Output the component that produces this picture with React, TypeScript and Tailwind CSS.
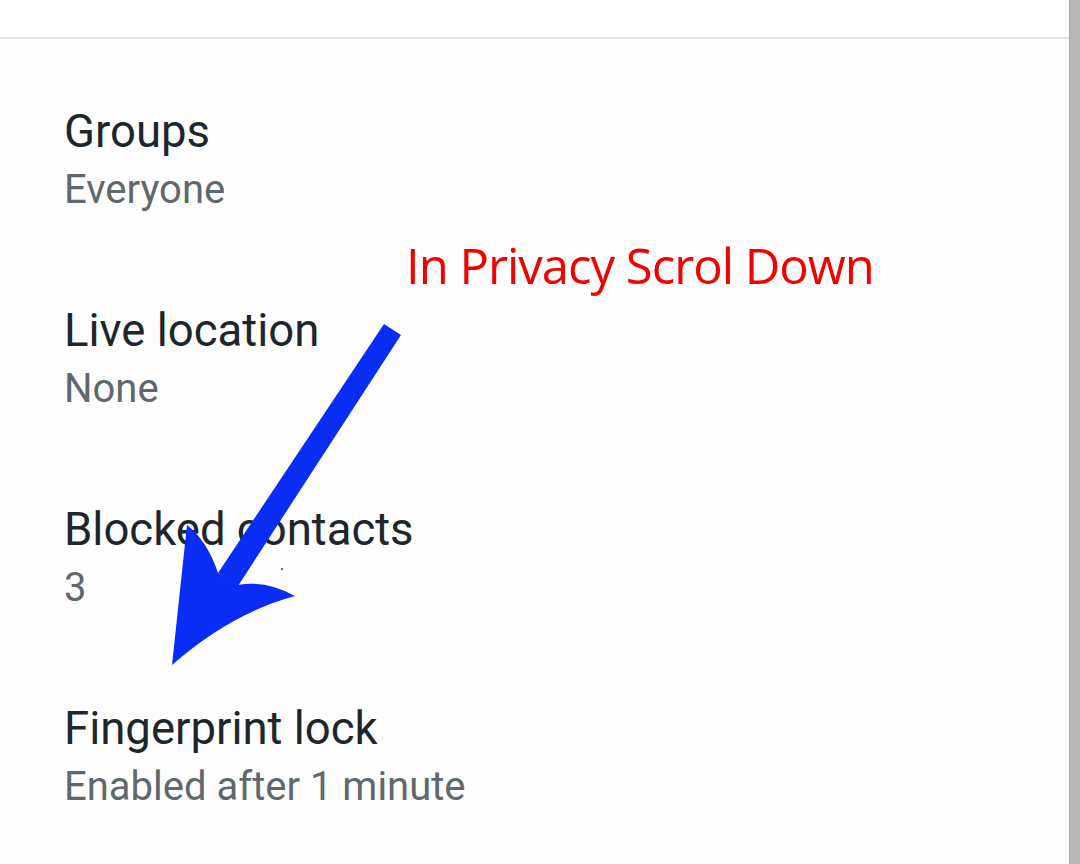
import React from "react";

const items = [
  { title: "Groups", sub: "Everyone" },
  { title: "Live location", sub: "None" },
  { title: "Blocked contacts", sub: "3" },
  { title: "Fingerprint lock", sub: "Enabled after 1 minute" },
];

export default function App() {
  return (
    <div className="relative flex h-[864px] w-[1080px] overflow-hidden bg-[#fefefe] font-['Roboto',sans-serif]">
      <div className="flex flex-1 flex-col">
        <div className="h-[37px] bg-white" />
        <div className="h-[2px] bg-[#e2e2e2]" />
        <div className="flex flex-col gap-[83px] pl-[64px] pt-[65px]">
          {items.map((it) => (
            <div key={it.title} className="flex flex-col">
              <div className="text-[45.5px] leading-[56px] text-[#1d262b]">{it.title}</div>
              <div className="text-[40px] leading-[60px] text-[#5e686d]">{it.sub}</div>
            </div>
          ))}
        </div>
      </div>
      <div className="w-[11px] border-l border-[#a9a9a9] bg-[#b8b8b8]" />

      <div className="absolute left-[406px] top-[233px] font-['Open_Sans',sans-serif] text-[49px] leading-[64px] tracking-[-1px] text-[#f20000]">
        In Privacy Scrol Down
      </div>

      <svg className="pointer-events-none absolute left-0 top-0" width="1080" height="864" viewBox="0 0 1080 864">
        <polygon points="384,324 401,335 238,586 218,573" fill="#0a2df5" />
        <path
          d="M187 525 Q207.5 541 218 573 L238 585 Q265.5 579.5 295 596 Q230.5 613.5 172 665 L187 525 Z"
          fill="#0a2df5"
        />
        <circle cx="282" cy="569" r="1.2" fill="#5a6cf0" />
      </svg>
    </div>
  );
}
